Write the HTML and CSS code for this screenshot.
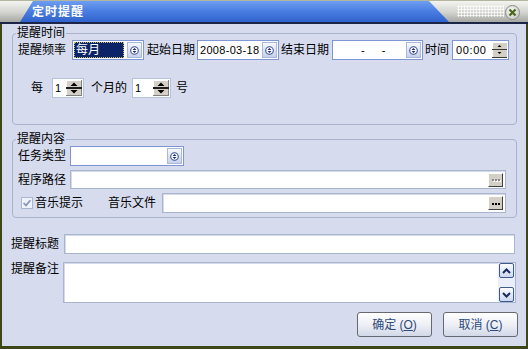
FILE: index.html
```html
<!DOCTYPE html>
<html lang="zh-CN">
<head>
    <meta charset="UTF-8">
    <title>定时提醒</title>
    <link rel="stylesheet" href="styles.css">
</head>
<body>
<div class="window">
    <!-- 标题栏 -->
    <div class="titlebar">
        <div class="caption">定时提醒</div>
        <div class="grip"></div>
        <button class="close-btn">
            <svg viewBox="0 0 9 9" width="9" height="9"><path d="M1.5 1.5L7.5 7.5M7.5 1.5L1.5 7.5"/></svg>
        </button>
    </div>

    <div class="body">
        <!-- 提醒时间 -->
        <fieldset class="group group-time">
            <legend>提醒时间</legend>
            <div class="row">
                <span class="lbl lbl-freq">提醒频率</span>
                <div class="combo combo-freq">
                    <span class="val selected">每月</span>
                    <span class="drop"><svg viewBox="0 0 9 9" width="9" height="9"><circle cx="4.5" cy="4.5" r="3.8"/><path d="M2.6 4L4.5 2.1L6.4 4Z M2.6 5L4.5 6.9L6.4 5Z"/></svg></span>
                </div>
                <span class="lbl lbl-start">起始日期</span>
                <div class="combo combo-date">
                    <span class="val num">2008-03-18</span>
                    <span class="drop"><svg viewBox="0 0 9 9" width="9" height="9"><circle cx="4.5" cy="4.5" r="3.8"/><path d="M2.6 4L4.5 2.1L6.4 4Z M2.6 5L4.5 6.9L6.4 5Z"/></svg></span>
                </div>
                <span class="lbl lbl-end">结束日期</span>
                <div class="combo combo-end">
                    <span class="val num empty-date">-&nbsp;&nbsp;&nbsp;&nbsp;&nbsp;-</span>
                    <span class="drop"><svg viewBox="0 0 9 9" width="9" height="9"><circle cx="4.5" cy="4.5" r="3.8"/><path d="M2.6 4L4.5 2.1L6.4 4Z M2.6 5L4.5 6.9L6.4 5Z"/></svg></span>
                </div>
                <span class="lbl lbl-time">时间</span>
                <div class="spinbox spin-time">
                    <span class="val num time-val">00:00</span>
                    <svg class="spin-sm" viewBox="0 0 15 16" width="15" height="16">
                        <rect width="15" height="16" fill="#d4d0c8"/>
                        <path d="M0 0.5H15M0.5 0V16" stroke="#fff"/>
                        <path d="M0 7.5H15M0 15.5H15" stroke="#3a3a3a"/>
                        <path d="M5.5 5H9.5L7.5 3Z M5.5 10H9.5L7.5 12Z" fill="#000"/>
                    </svg>
                </div>
            </div>
            <div class="row row-every">
                <span class="lbl lbl-every">每</span>
                <div class="spinbox spin-num">
                    <span class="val num">1</span>
                    <svg class="spin-lg" viewBox="0 0 16 16" width="16" height="16">
                        <rect width="16" height="16" fill="#d4d0c8"/>
                        <path d="M0 0.5H16M0.5 0V16" stroke="#fff"/>
                        <path d="M15.5 0V16M0 15.5H16" stroke="#808080"/>
                        <path d="M0 8H16" stroke="#1e1e1e" stroke-width="2"/>
                        <path d="M4.5 6H11.5L8 2.5Z M4.5 10H11.5L8 13.5Z" fill="#000"/>
                    </svg>
                </div>
                <span class="lbl lbl-month">个月的</span>
                <div class="spinbox spin-num spin-day">
                    <span class="val num">1</span>
                    <svg class="spin-lg" viewBox="0 0 16 16" width="16" height="16">
                        <rect width="16" height="16" fill="#d4d0c8"/>
                        <path d="M0 0.5H16M0.5 0V16" stroke="#fff"/>
                        <path d="M15.5 0V16M0 15.5H16" stroke="#808080"/>
                        <path d="M0 8H16" stroke="#1e1e1e" stroke-width="2"/>
                        <path d="M4.5 6H11.5L8 2.5Z M4.5 10H11.5L8 13.5Z" fill="#000"/>
                    </svg>
                </div>
                <span class="lbl lbl-day">号</span>
            </div>
        </fieldset>

        <!-- 提醒内容 -->
        <fieldset class="group group-content">
            <legend>提醒内容</legend>
            <div class="row">
                <span class="lbl lbl-type">任务类型</span>
                <div class="combo combo-type">
                    <span class="val"></span>
                    <span class="drop"><svg viewBox="0 0 9 9" width="9" height="9"><circle cx="4.5" cy="4.5" r="3.8"/><path d="M2.6 4L4.5 2.1L6.4 4Z M2.6 5L4.5 6.9L6.4 5Z"/></svg></span>
                </div>
            </div>
            <div class="row row-path">
                <span class="lbl lbl-type">程序路径</span>
                <div class="field">
                    <span class="browse-btn disabled"><i></i><i></i><i></i></span>
                </div>
            </div>
            <div class="row row-music">
                <svg class="check" viewBox="0 0 12 12" width="12" height="12">
                    <rect x="0.5" y="0.5" width="11" height="11" fill="#eef2fa" stroke="#a9b6d0"/>
                    <path d="M2.6 6L5 8.4L9.4 3.2" fill="none" stroke="#8596b8" stroke-width="1.7"/>
                </svg>
                <span class="lbl lbl-check">音乐提示</span>
                <span class="lbl lbl-file">音乐文件</span>
                <div class="field">
                    <span class="browse-btn"><i></i><i></i><i></i></span>
                </div>
            </div>
        </fieldset>

        <div class="row row-title">
            <span class="lbl lbl-bottom">提醒标题</span>
            <div class="field"></div>
        </div>

        <div class="row-note">
            <span class="lbl lbl-bottom lbl-note">提醒备注</span>
            <div class="memo">
                <div class="memo-text"></div>
                <div class="memo-scroll">
                    <span class="scroll-btn"><svg viewBox="0 0 9 6" width="9" height="6"><path d="M1 5L4.5 1.5L8 5"/></svg></span>
                    <span class="scroll-btn"><svg viewBox="0 0 9 6" width="9" height="6"><path d="M1 1L4.5 4.5L8 1"/></svg></span>
                </div>
            </div>
        </div>

        <div class="actions">
            <button class="btn">确定 (<u>O</u>)</button>
            <button class="btn">取消 (<u>C</u>)</button>
        </div>
    </div>
</div>
</body>
</html>
```

FILE: styles.css
```css
* {
    box-sizing: border-box;
}
body {
    margin: 0;
    font: 12px/14px "Liberation Sans", "Noto Sans CJK SC", sans-serif;
    color: #000;
    background: #d6dcee;
}
.window {
    width: 528px;
    height: 349px;
    display: flex;
    flex-direction: column;
}

/* 标题栏 */
.titlebar {
    flex: none;
    height: 24px;
    display: flex;
    background: linear-gradient(#f4f4f0, #d2d2ce 55%, #a6a6a2);
    border-top: 1px solid #b2b69e;
    border-bottom: 2px solid #1c2548;
}
.caption {
    width: 429px;
    margin-left: 20px;
    padding: 1px 0 0 12px;
    clip-path: polygon(13px 0, 409px 0, 429px 100%, 0 100%);
    background: linear-gradient(#6e9ef2, #4c80e2 45%, #2f62cc);
    color: #fff;
    font-weight: bold;
    line-height: 20px;
    letter-spacing: 1px;
}
.grip {
    width: 47px;
    height: 12px;
    margin: 4px 0 0 8px;
    background-image: radial-gradient(circle, #fff 0.9px, transparent 1.2px);
    background-size: 3px 3px;
}
.close-btn {
    width: 15px;
    height: 15px;
    margin: 4px 0 0 1px;
    padding: 0;
    border: 1px solid #8a8a86;
    border-radius: 50%;
    background: radial-gradient(circle at 40% 35%, #fbfbfb, #bdbdb8);
    display: flex;
    align-items: center;
    justify-content: center;
}
.close-btn svg path {
    stroke: #4b6a1c;
    stroke-width: 2.3;
}

/* 主体 */
.body {
    flex: 1;
    border: 2px solid #3c4616;
    border-top: 0;
    border-bottom-width: 3px;
    padding: 2px 9px 0 10px;
    display: flex;
    flex-direction: column;
}
.group {
    margin: 0;
    padding: 0 5px;
    min-width: 0;
    border: 1px solid #a8b3cb;
    border-radius: 4px;
}
.group legend {
    padding: 0 1px;
    margin-left: -2px;
    line-height: 14px;
}
.group-time {
    padding-bottom: 26px;
}
.group-content {
    margin-top: 7px;
    padding: 0 10px 4px 5px;
}
.row {
    display: flex;
    align-items: center;
    height: 20px;
}
.lbl {
    flex: none;
    white-space: nowrap;
}
.num {
    font-size: 11px;
    letter-spacing: 0.3px;
}

/* 第一行间距 */
.lbl-freq { margin-right: 6px; }
.lbl-start { margin: 0 2px 0 3px; }
.lbl-end { margin: 0 3px 0 2px; }
.lbl-time { margin: 0 3px 0 2px; }

.combo {
    height: 20px;
    display: flex;
    border: 1px solid #7e97d2;
    background: #fff;
}
.combo .val {
    flex: 1;
    padding-left: 2px;
    line-height: 18px;
    white-space: pre;
}
.combo-freq { width: 72px; }
.combo-date { width: 82px; }
.combo-end { width: 91px; }
.combo-type { width: 114px; }
.combo .selected {
    margin: 1px 2px 1px 1px;
    line-height: 16px;
    background: #0b2468;
    color: #fff;
    outline: 1px dotted #c9c06a;
    outline-offset: -1px;
}
.empty-date {
    padding-left: 28px !important;
}
.drop {
    flex: none;
    width: 15px;
    margin: 1px;
    border: 1px solid #a9b8da;
    background: linear-gradient(#f7f9fe, #c6d1ec);
    display: flex;
    align-items: center;
    justify-content: center;
}
.drop circle {
    fill: #fff;
    stroke: #3e5290;
    stroke-width: 1.1;
}
.drop path {
    fill: #16276a;
}

.spinbox {
    height: 20px;
    display: flex;
    align-items: center;
    border: 1px solid #b6c2dc;
    background: #fff;
}
.spinbox .val {
    flex: 1;
    padding-left: 2px;
}
.spin-time {
    width: 57px;
    border-color: #7e97d2;
}
.time-val {
    padding-left: 3px !important;
    letter-spacing: 0.6px;
}
.spin-sm {
    margin-right: 1px;
}
.spin-lg {
    margin-right: 1px;
}

/* 第二行 */
.row-every {
    margin-top: 18px;
}
.lbl-every { margin: 0 9px 0 13px; }
.spin-num { width: 32px; }
.spin-day { width: 39px; }
.lbl-month { margin: 0 5px 0 7px; }
.lbl-day { margin-left: 5px; }

/* 提醒内容 */
.lbl-type { margin-right: 4px; }
.row-path {
    margin-top: 4px;
    height: 19px;
}
.row-music {
    margin-top: 4px;
}
.check {
    flex: none;
    margin-left: 3px;
}
.lbl-check { margin-left: 2px; }
.lbl-file { margin: 0 6px 0 25px; }

.field {
    flex: 1;
    height: 100%;
    display: flex;
    align-items: center;
    justify-content: flex-end;
    border: 1px solid #a9b5cf;
    box-shadow: inset 1px 1px 0 #d4dae8;
    background: #fff;
}
.browse-btn {
    width: 15px;
    height: 14px;
    margin-right: 2px;
    display: flex;
    align-items: center;
    justify-content: center;
    gap: 1px;
    padding-top: 1px;
    background: #d4d0c8;
    border: 1px solid;
    border-color: #fff #404040 #404040 #fff;
}
.browse-btn i {
    width: 2px;
    height: 2px;
    background: #000;
}
.browse-btn.disabled i {
    background: #8a8a8a;
    box-shadow: 1px 1px 0 #fff;
}

/* 标题与备注 */
.row-title {
    margin-top: 16px;
}
.lbl-bottom {
    margin: 0 5px 0 -1px;
}
.row-title .field {
    margin-right: 2px;
}
.row-note {
    display: flex;
    align-items: flex-start;
    height: 41px;
    margin-top: 8px;
}
.lbl-note {
    margin: 0 4px 0 -1px;
}
.memo {
    flex: 1;
    height: 100%;
    display: flex;
    border: 1px solid #a9b5cf;
    box-shadow: inset 1px 1px 0 #d4dae8;
    background: #fff;
    margin-right: 1px;
}
.memo-text {
    flex: 1;
}
.memo-scroll {
    width: 17px;
    padding: 0 1px;
    display: flex;
    flex-direction: column;
    justify-content: space-between;
    background: #e9eef8;
}
.scroll-btn {
    height: 15px;
    display: flex;
    align-items: center;
    justify-content: center;
    border: 1px solid #3d5a8c;
    border-radius: 2px;
    background: linear-gradient(#fbfcff, #cdd8ef);
}
.scroll-btn path {
    fill: none;
    stroke: #1c2c5c;
    stroke-width: 2;
}

/* 按钮 */
.actions {
    display: flex;
    justify-content: flex-end;
    gap: 11px;
    margin: 9px -1px 0 0;
}
.btn {
    width: 75px;
    height: 25px;
    padding: 0;
    border: 1px solid #666a70;
    border-radius: 3px;
    background: linear-gradient(#ffffff, #eceef5 55%, #d2d8e8);
    color: #2e4a78;
    font: 12px/14px "Liberation Sans", "Noto Sans CJK SC", sans-serif;
}
```
